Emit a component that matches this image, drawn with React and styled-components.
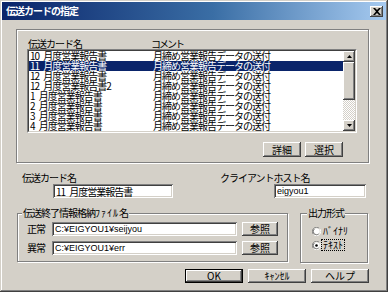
import React from "react"
import styled, { createGlobalStyle, css } from "styled-components"

const cards = [
  "10 月度営業報告書",
  "11 月度営業報告書",
  "12 月度営業報告書",
  "12 月度営業報告書2",
  "1 月度営業報告書",
  "2 月度営業報告書",
  "3 月度営業報告書",
  "4 月度営業報告書",
]
const comment = "月締め営業報告データの送付"

function App() {
  return (
    <>
      <GlobalStyle />
      <Window>
        <TitleBar>
          <TitleText>伝送カードの指定</TitleText>
          <CloseButton aria-label="close">
            <svg width="8" height="7" viewBox="0 0 8 7">
              <path d="M0 0h2l2 2 2-2h2L5 3.5 8 7H6L4 5 2 7H0l3-3.5z" fill="#000" />
            </svg>
          </CloseButton>
        </TitleBar>

        <Body>
          <CardGroup>
            <ListHeader>
              <HeaderCell $w={123}>伝送カード名</HeaderCell>
              <HeaderCell $tight>コメント</HeaderCell>
            </ListHeader>
            <ListBox>
              <ListInner>
                <Rows>
                  {cards.map((name, i) => (
                    <Row key={name} $selected={i === 1}>
                      <NameCell>{name}</NameCell>
                      <CommentCell>{comment}</CommentCell>
                    </Row>
                  ))}
                </Rows>
                <ScrollBar>
                  <ArrowButton>
                    <svg width="5" height="3" viewBox="0 0 5 3">
                      <path d="M2.5 0L5 3H0z" fill="#000" />
                    </svg>
                  </ArrowButton>
                  <Thumb />
                  <Track />
                  <ArrowButton>
                    <svg width="5" height="3" viewBox="0 0 5 3">
                      <path d="M0 0h5L2.5 3z" fill="#000" />
                    </svg>
                  </ArrowButton>
                </ScrollBar>
              </ListInner>
            </ListBox>
            <GroupActions>
              <Button $w={38} $h={15}>詳細</Button>
              <Button $w={38} $h={15}>選択</Button>
            </GroupActions>
          </CardGroup>

          <FieldsRow>
            <Field>
              <Label>伝送カード名</Label>
              <TextBox $indent={31} $w={120} readOnly value="11 月度営業報告書" />
            </Field>
            <Field>
              <Label>クライアントホスト名</Label>
              <TextBox $indent={54} $w={92} $latin readOnly value="eigyou1" />
            </Field>
          </FieldsRow>

          <FramesRow>
            <Frame $w={271} $h={49}>
              <Legend $indent={4}>
                伝送終了情報格納<HalfWidth>ﾌｧｲﾙ</HalfWidth>名
              </Legend>
              <FileRows>
                <FileRow>
                  <RowLabel>正常</RowLabel>
                  <TextBox $w={185} $latin readOnly value="C:¥EIGYOU1¥seijyou" />
                  <Button $w={36}>参照</Button>
                </FileRow>
                <FileRow>
                  <RowLabel>異常</RowLabel>
                  <TextBox $w={185} $latin readOnly value="C:¥EIGYOU1¥err" />
                  <Button $w={36}>参照</Button>
                </FileRow>
              </FileRows>
            </Frame>

            <Frame $w={68} $h={50}>
              <Legend $indent={6}>出力形式</Legend>
              <RadioList>
                <RadioRow>
                  <Radio />
                  <RadioText>ﾊﾞｲﾅﾘ</RadioText>
                </RadioRow>
                <RadioRow>
                  <Radio $checked />
                  <RadioText $focus>ﾃｷｽﾄ</RadioText>
                </RadioRow>
              </RadioList>
            </Frame>
          </FramesRow>

          <DialogActions>
            <Button $w={58} $default>OK</Button>
            <Button $w={58}>ｷｬﾝｾﾙ</Button>
            <Button $w={58}>ヘルプ</Button>
          </DialogActions>
        </Body>
      </Window>
    </>
  )
}

function Radio({ $checked }) {
  return (
    <RadioMark width="9" height="9" viewBox="0 0 12 12">
      <path d="M10 2A5.5 5.5 0 0 0 2 10" fill="none" stroke="#808080" strokeWidth="1.2" />
      <path d="M2 10A5.5 5.5 0 0 0 10 2" fill="none" stroke="#fff" strokeWidth="1.2" />
      <circle cx="6" cy="6" r="4.3" fill="#fff" stroke="#404040" strokeWidth="0.9" strokeDasharray="13.5 13.5" strokeDashoffset="-3.4" />
      {$checked && <circle cx="6" cy="6" r="1.7" fill="#000" />}
    </RadioMark>
  )
}

export default App

const GlobalStyle = createGlobalStyle`
  *, *::before, *::after { box-sizing: border-box; }
  html, body { margin: 0; padding: 0; background: #fff; }
  body { font-family: "Noto Sans CJK JP", "Liberation Sans", sans-serif; }
`

const raised = css`
  background: #d4d0c8;
  box-shadow: inset -1px -1px #404040, inset 1px 1px #fff,
    inset -2px -2px #808080, inset 2px 2px #d4d0c8;
`

const sunken = css`
  background: #fff;
  box-shadow: inset 1px 1px #808080, inset -1px -1px #fff,
    inset 2px 2px #404040, inset -2px -2px #d4d0c8;
`

const etched = css`
  border: 1px solid #808080;
  box-shadow: inset 1px 1px #fff, 1px 1px #fff;
`

const Window = styled.div`
  width: 388px;
  height: 292px;
  padding: 2px;
  background: #d4d0c8;
  box-shadow: inset -1px -1px #404040, inset 1px 1px #d4d0c8,
    inset -2px -2px #808080, inset 2px 2px #fff;
`

const TitleBar = styled.div`
  height: 18px;
  display: flex;
  align-items: center;
  justify-content: space-between;
  padding: 0 3px 0 4px;
  background: linear-gradient(90deg, #0a246a 0%, #3a6ea5 55%, #a6caf0 100%);
`

const TitleText = styled.span`
  color: #fff;
  font-size: 10px;
  font-weight: bold;
  letter-spacing: -1px;
  line-height: 1;
`

const CloseButton = styled.span`
  ${raised}
  width: 13px;
  height: 11px;
  display: flex;
  align-items: center;
  justify-content: center;
`

const Body = styled.div`
  padding: 9px 17px 0 14px;
  display: flex;
  flex-direction: column;
`

const CardGroup = styled.div`
  ${etched}
  height: 134px;
  padding: 9px 11px 0 10px;
  display: flex;
  flex-direction: column;
`

const ListHeader = styled.div`
  display: flex;
  height: 10px;
  padding-left: 1px;
  font-size: 10px;
  line-height: 10px;
  letter-spacing: -1px;
  color: #000;
`

const HeaderCell = styled.span`
  width: ${(p) => (p.$w ? `${p.$w}px` : "auto")};
  flex-shrink: 0;
  letter-spacing: ${(p) => (p.$tight ? "-2px" : "inherit")};
`

const ListBox = styled.div`
  height: 84px;
  border: 1px solid;
  border-color: #808080 #fff #fff #808080;
`

const ListInner = styled.div`
  height: 100%;
  display: flex;
  background: #fff;
  border: 1px solid;
  border-color: #404040 #d4d0c8 #d4d0c8 #404040;
`

const Rows = styled.div`
  flex: 1;
  display: flex;
  flex-direction: column;
`

const Row = styled.div`
  display: flex;
  height: 10px;
  padding-left: 1px;
  font-size: 10px;
  line-height: 10px;
  letter-spacing: -1px;
  word-spacing: 3px;
  white-space: nowrap;
  color: ${(p) => (p.$selected ? "#fff" : "#000")};
  background: ${(p) => (p.$selected ? "#0a246a" : "transparent")};
`

const NameCell = styled.span`
  width: 123px;
  flex-shrink: 0;
`

const CommentCell = styled.span``

const ScrollBar = styled.div`
  width: 12px;
  display: flex;
  flex-direction: column;
`

const ArrowButton = styled.div`
  ${raised}
  height: 11px;
  display: flex;
  align-items: center;
  justify-content: center;
`

const Thumb = styled.div`
  ${raised}
  height: 38px;
`

const Track = styled.div`
  flex: 1;
  background: repeating-conic-gradient(#d4d0c8 0 25%, #fff 0 50%) 0 0 / 2px 2px;
`

const GroupActions = styled.div`
  display: flex;
  justify-content: flex-end;
  gap: 4px;
  margin: 9px 14px 0 0;
`

const Button = styled.div`
  ${raised}
  width: ${(p) => p.$w}px;
  height: ${(p) => p.$h || 14}px;
  flex-shrink: 0;
  display: flex;
  align-items: center;
  justify-content: center;
  font-family: "Noto Sans CJK JP", "Liberation Sans", sans-serif;
  font-size: 10px;
  line-height: 1;
  color: #000;
  ${(p) =>
    p.$default &&
    css`
      border: 1px solid #000;
    `}
`

const FieldsRow = styled.div`
  display: grid;
  grid-template-columns: 198px 1fr;
  margin-top: 10px;
  padding-left: 6px;
`

const Field = styled.div`
  display: flex;
  flex-direction: column;
  gap: 1px;
`

const Label = styled.span`
  font-size: 10px;
  line-height: 10px;
  letter-spacing: -1px;
  color: #000;
`

const TextBox = styled.input`
  ${sunken}
  width: ${(p) => p.$w}px;
  height: 14px;
  margin-left: ${(p) => p.$indent || 0}px;
  border: none;
  outline: none;
  padding: 0 0 0 3px;
  font-family: ${(p) =>
    p.$latin
      ? `"Liberation Sans", "Noto Sans CJK JP", sans-serif`
      : `"Noto Sans CJK JP", sans-serif`};
  font-size: ${(p) => (p.$latin ? "9px" : "10px")};
  letter-spacing: ${(p) => (p.$latin ? "0" : "-1px")};
  word-spacing: ${(p) => (p.$latin ? "0" : "3px")};
  color: #000;
`

const FramesRow = styled.div`
  display: flex;
  gap: 12px;
  margin-top: 15px;
  padding-left: 1px;
`

const Frame = styled.div`
  ${etched}
  width: ${(p) => p.$w}px;
  height: ${(p) => p.$h}px;
  display: flex;
  flex-direction: column;
`

const Legend = styled.span`
  align-self: flex-start;
  margin: -6px 0 0 ${(p) => p.$indent}px;
  padding: 0 1px;
  background: #d4d0c8;
  font-size: 10px;
  line-height: 10px;
  letter-spacing: -1px;
  color: #000;
`

const HalfWidth = styled.span`
  letter-spacing: 1px;
`

const FileRows = styled.div`
  display: flex;
  flex-direction: column;
  gap: 5px;
  margin-top: 4px;
  padding-left: 9px;
`

const FileRow = styled.div`
  display: flex;
  align-items: center;
  gap: 5px;
`

const RowLabel = styled.span`
  width: 20px;
  font-size: 10px;
  line-height: 10px;
  letter-spacing: -1px;
  color: #000;
`

const RadioList = styled.div`
  display: flex;
  flex-direction: column;
  gap: 4px;
  margin-top: 8px;
  padding-left: 11px;
`

const RadioRow = styled.div`
  display: flex;
  align-items: center;
  gap: 1px;
  height: 10px;
`

const RadioMark = styled.svg`
  flex-shrink: 0;
`

const RadioText = styled.span`
  font-size: 10px;
  line-height: 10px;
  color: #000;
  padding: 0 1px;
  outline: ${(p) => (p.$focus ? "1px dotted #000" : "none")};
`

const DialogActions = styled.div`
  display: flex;
  justify-content: flex-end;
  gap: 5px;
  margin-top: 6px;
`
